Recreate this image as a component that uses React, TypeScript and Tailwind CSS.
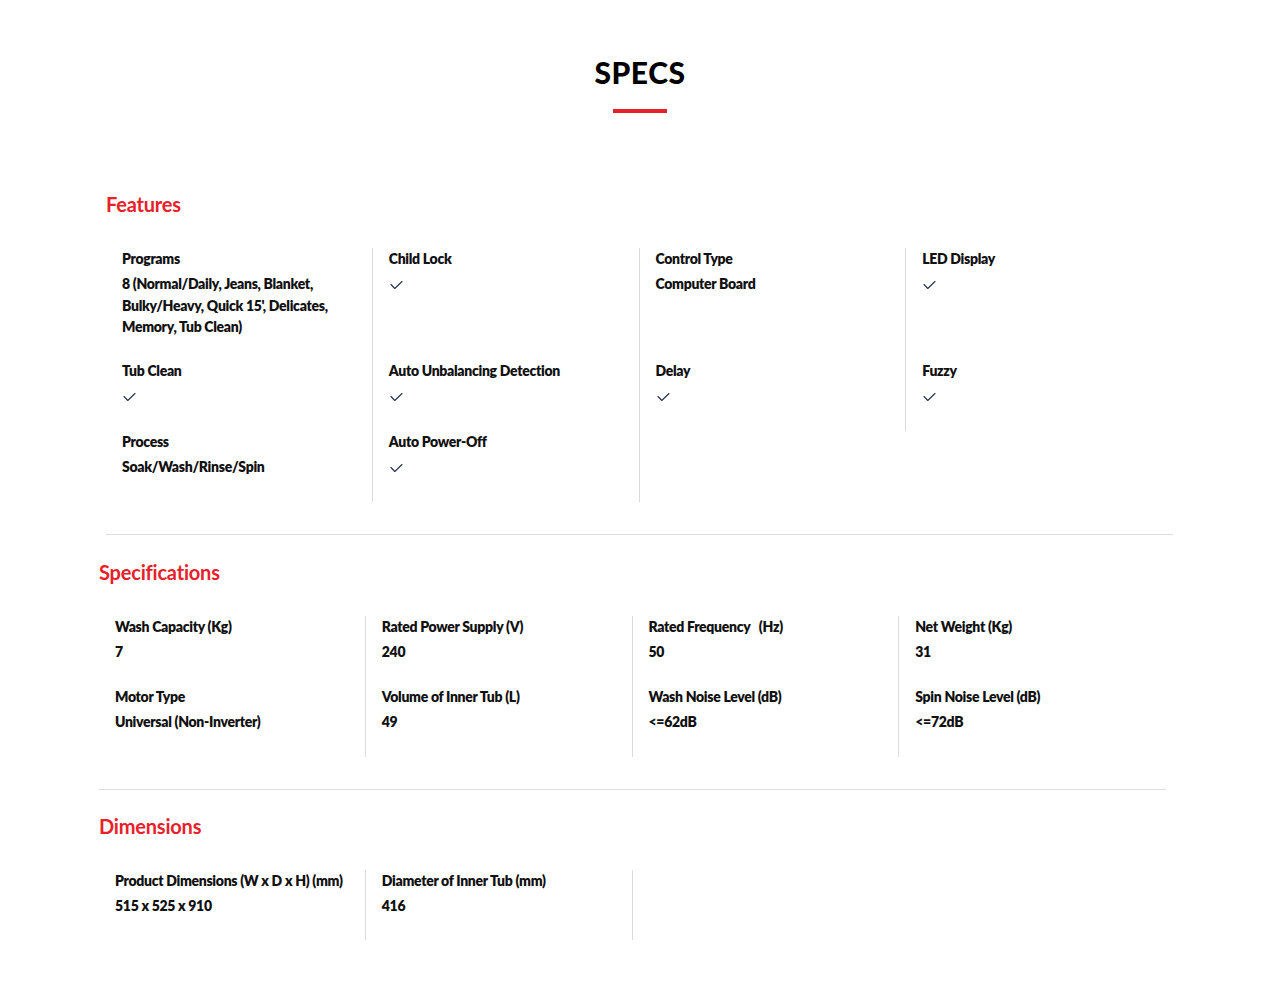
type Spec = { label: string; value?: string; check?: boolean };

const features: Spec[] = [
  {
    label: "Programs",
    value: "8 (Normal/Daily, Jeans, Blanket, Bulky/Heavy, Quick 15', Delicates, Memory, Tub Clean)",
  },
  { label: "Child Lock", check: true },
  { label: "Control Type", value: "Computer Board" },
  { label: "LED Display", check: true },
  { label: "Tub Clean", check: true },
  { label: "Auto Unbalancing Detection", check: true },
  { label: "Delay", check: true },
  { label: "Fuzzy", check: true },
  { label: "Process", value: "Soak/Wash/Rinse/Spin" },
  { label: "Auto Power-Off", check: true },
];

const specifications: Spec[] = [
  { label: "Wash Capacity (Kg)", value: "7" },
  { label: "Rated Power Supply (V)", value: "240" },
  { label: "Rated Frequency\u00a0\u00a0\u00a0(Hz)", value: "50" },
  { label: "Net Weight (Kg)", value: "31" },
  { label: "Motor Type", value: "Universal (Non-Inverter)" },
  { label: "Volume of Inner Tub (L)", value: "49" },
  { label: "Wash Noise Level (dB)", value: "<=62dB" },
  { label: "Spin Noise Level (dB)", value: "<=72dB" },
];

const dimensions: Spec[] = [
  { label: "Product Dimensions (W x D x H) (mm)", value: "515 x 525 x 910" },
  { label: "Diameter of Inner Tub (mm)", value: "416" },
];

const Check = () => (
  <svg width="13" height="10" viewBox="0 0 13 10" fill="none">
    <polyline
      points="1,4.5 4.8,8.5 12,1.5"
      stroke="#22304f"
      strokeWidth="1.1"
      strokeLinecap="round"
      strokeLinejoin="round"
    />
  </svg>
);

const SpecGrid = ({ items, roomy }: { items: Spec[]; roomy?: boolean }) => (
  <div className="grid grid-cols-4">
    {items.map((item) => (
      <div
        key={item.label}
        className={
          "border-r border-[#dadada] px-4 [&:nth-child(4n)]:border-r-0 " +
          (roomy ? "pb-6" : "pb-[22px]")
        }
      >
        <p className="text-[14px] font-extrabold leading-[21px] tracking-[-0.3px] text-[#111]">
          {item.label}
        </p>
        {item.check ? (
          <div className="mt-1 flex h-6 items-center pl-px">
            <Check />
          </div>
        ) : (
          <p className="mt-1 pr-6 text-[14px] font-extrabold leading-[21.5px] tracking-[-0.3px] text-[#111]">
            {item.value}
          </p>
        )}
      </div>
    ))}
  </div>
);

const SectionTitle = ({ children }: { children: string }) => (
  <h3 className="text-[20px] font-bold leading-7 tracking-[-0.2px] text-[#e8202a]">
    {children}
  </h3>
);

export default function App() {
  return (
    <div className="min-h-screen bg-white pb-12 font-['Lato',sans-serif]">
      <div className="flex flex-col items-center pt-[54px]">
        <h2 className="text-[30px] font-black leading-9 tracking-[0.5px] text-black">
          SPECS
        </h2>
        <div className="mt-[19px] h-1 w-[54px] bg-[#e8202a]" />
      </div>

      <section className="ml-[106px] mt-[77px] w-[1067px]">
        <SectionTitle>Features</SectionTitle>
        <div className="mt-[30px]">
          <SpecGrid items={features} />
        </div>
        <div className="mt-8 h-px bg-[#dcdcdc]" />
      </section>

      <section className="ml-[99px] mt-[23px] w-[1067px]">
        <SectionTitle>Specifications</SectionTitle>
        <div className="mt-[30px]">
          <SpecGrid items={specifications} roomy />
        </div>
        <div className="mt-8 h-px bg-[#dcdcdc]" />
      </section>

      <section className="ml-[99px] mt-[22px] w-[1067px]">
        <SectionTitle>Dimensions</SectionTitle>
        <div className="mt-[30px]">
          <SpecGrid items={dimensions} roomy />
        </div>
      </section>
    </div>
  );
}
